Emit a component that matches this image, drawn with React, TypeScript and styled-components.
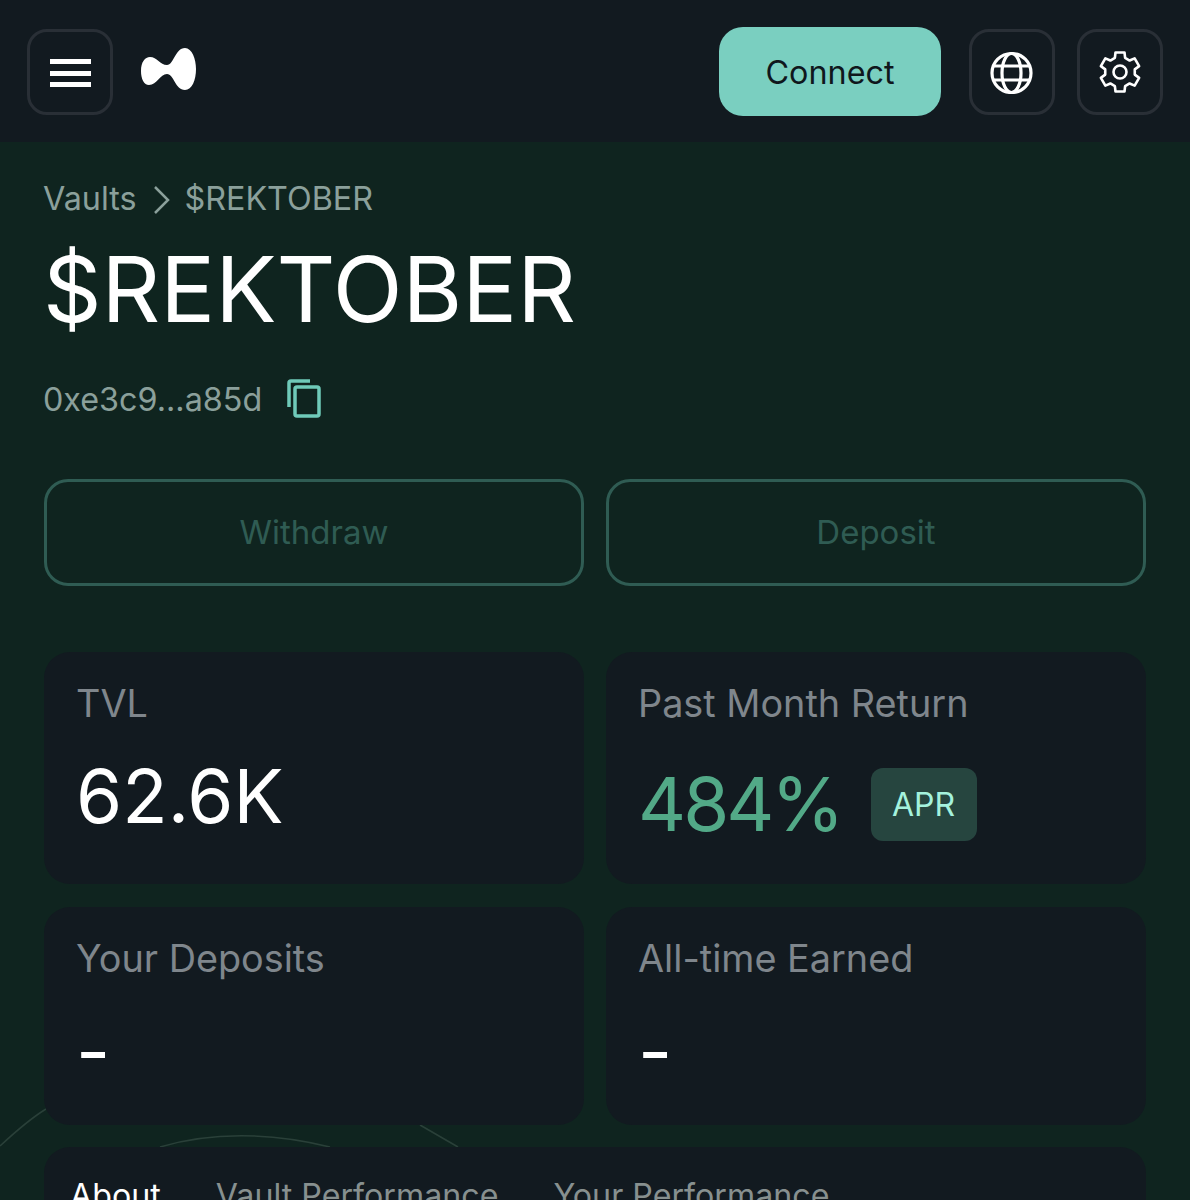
import styled, { createGlobalStyle } from 'styled-components';

const GlobalStyle = createGlobalStyle`
    html, body {
        margin: 0;
        background: #0f241f;
        font-family: Inter, "Liberation Sans", sans-serif;
    }
`;

const Page = styled.div`
    position: relative;
    width: 1190px;
    height: 1200px;
    overflow: hidden;
    background: #0f241f;
`;

const TopBar = styled.header`
    display: flex;
    align-items: center;
    height: 142px;
    padding: 0 27px 0 27px;
    box-sizing: border-box;
    background: #121a20;
`;

const IconButton = styled.button`
    display: flex;
    align-items: center;
    justify-content: center;
    width: 86px;
    height: 86px;
    margin-top: 2px;
    padding: 0;
    box-sizing: border-box;
    background: transparent;
    border: 3px solid #292f36;
    border-radius: 20px;
    color: #fff;
`;

const Logo = styled.svg`
    width: 58px;
    height: 44px;
    margin: -4px 0 0 26px;
`;

const Spacer = styled.div`
    flex: 1;
`;

const ConnectButton = styled.button`
    width: 222px;
    height: 89px;
    margin-right: 28px;
    padding: 2px 0 0;
    background: #7acfc0;
    border: none;
    border-radius: 24px;
    color: #0f171c;
    font: 400 32.3px Inter, sans-serif;
`;

const SettingsButton = styled(IconButton)`
    margin-left: 22px;
`;

const Main = styled.main`
    position: relative;
    padding: 0 44px;
`;

const Breadcrumbs = styled.nav`
    display: flex;
    align-items: center;
    height: 40px;
    margin-left: -1px;
    padding-top: 37px;
    color: #8ba09b;
    font-size: 32.3px;
    line-height: 40px;
`;

const Crumb = styled.span`
    display: block;
`;

const Chevron = styled.svg`
    width: 20px;
    height: 32px;
    margin: 2px 12px 0 16px;
`;

const Title = styled.h1`
    margin: 17px 0 0 -1px;
    color: #fff;
    font-size: 91.3px;
    font-weight: 400;
    line-height: 107px;
`;

const AddressRow = styled.div`
    display: flex;
    align-items: center;
    height: 42px;
    margin: 35px 0 0 -1px;
    color: #8ba09b;
    font-size: 32.3px;
`;

const CopyIcon = styled.svg`
    width: 36px;
    height: 40px;
    margin: -2px 0 0 24px;
`;

const ActionRow = styled.div`
    display: grid;
    grid-template-columns: 1fr 1fr;
    gap: 22px;
    margin-top: 59px;
`;

const ActionButton = styled.button`
    height: 107px;
    padding: 0 0 2px;
    background: transparent;
    border: 3px solid #2f5c53;
    border-radius: 24px;
    color: #2f5c53;
    font: 400 33px Inter, sans-serif;
`;

const StatsGrid = styled.div`
    display: grid;
    grid-template-columns: 1fr 1fr;
    grid-template-rows: 232px 218px;
    gap: 23px 22px;
    margin-top: 66px;
`;

const StatCard = styled.section`
    position: relative;
    padding: 29px 32px 0;
    background: #121a20;
    border-radius: 26px;
`;

const StatLabel = styled.div`
    color: #7f868c;
    font-size: 37.8px;
    line-height: 44px;
`;

const StatValueRow = styled.div<{ $top: number }>`
    display: flex;
    align-items: center;
    margin-top: ${p => p.$top}px;
`;

const StatValue = styled.div<{ $accent?: boolean }>`
    color: ${p => (p.$accent ? '#52a987' : '#fff')};
    font-size: 74.5px;
    letter-spacing: ${p => (p.$accent ? '-3px' : '0')};
    line-height: 92px;
`;

const Badge = styled.span`
    display: flex;
    align-items: center;
    justify-content: center;
    width: 106px;
    height: 73px;
    margin-left: 29px;
    background: #26453f;
    border-radius: 12px;
    color: #a4f2dd;
    font-size: 32px;
`;

const TabsCard = styled.section`
    display: flex;
    gap: 55px;
    height: 120px;
    margin-top: 22px;
    padding: 29px 26px 0;
    background: #121a20;
    border-radius: 26px 26px 0 0;
`;

const Tab = styled.span<{ $active?: boolean }>`
    color: ${p => (p.$active ? '#fff' : '#87908f')};
    font-size: 32.2px;
    line-height: 40px;
`;

const Waves = styled.svg`
    position: absolute;
    left: 0;
    top: 1060px;
    width: 600px;
    height: 140px;
`;

// six teeth, one pointing straight up
const gearPoints = Array.from({ length: 6 })
    .flatMap((_, i) => {
        const a = -90 + 60 * i;
        return [
            [a - 20, 15],
            [a - 13, 20],
            [a + 13, 20],
            [a + 20, 15],
        ];
    })
    .map(([deg, r]) => {
        const rad = (deg * Math.PI) / 180;
        return `${(22 + r * Math.cos(rad)).toFixed(2)},${(22 + r * Math.sin(rad)).toFixed(2)}`;
    })
    .join(' ');

export default function App() {
    return (
        <Page>
            <GlobalStyle />
            <Waves viewBox="0 0 600 140" fill="none" stroke="#2a4039" strokeWidth="1.5">
                <path d="M0 86C14 73 28 60 46 49" />
                <path d="M160 87C210 72 270 72 330 87" />
                <path d="M420 65L458 87" />
            </Waves>
            <TopBar>
                <IconButton>
                    <svg width="44" height="32" viewBox="0 0 44 32" fill="#fff">
                        <rect x="2" y="3" width="41" height="5" />
                        <rect x="2" y="15" width="41" height="5" />
                        <rect x="2" y="26" width="41" height="5" />
                    </svg>
                </IconButton>
                <Logo viewBox="0 0 58 44" fill="#fff">
                    <path d="M2 24C2 15 6 10 11 10C18 10 21 18 28 18C35 18 36 1 46 1C53 1 57 12 57 22C57 33 53 43 46 43C36 43 35 27 28 27C21 27 18 38 10 38C5 38 2 32 2 24Z" />
                </Logo>
                <Spacer />
                <ConnectButton>Connect</ConnectButton>
                <IconButton>
                    <svg width="44" height="44" viewBox="0 0 44 44" fill="none" stroke="#fff" strokeWidth="3.200">
                        <circle cx="21.500" cy="23" r="19.500" />
                        <ellipse cx="21.500" cy="23" rx="9.500" ry="19.500" />
                        <path d="M3 16H40M3 30H40" />
                    </svg>
                </IconButton>
                <SettingsButton>
                    <svg width="44" height="44" viewBox="0 0 44 44" fill="none" stroke="#fff" strokeWidth="2.600" strokeLinejoin="round">
                        <polygon points={gearPoints} />
                        <circle cx="22" cy="22" r="6.500" />
                    </svg>
                </SettingsButton>
            </TopBar>
            <Main>
                <Breadcrumbs>
                    <Crumb>Vaults</Crumb>
                    <Chevron viewBox="0 0 20 32" fill="none" stroke="#8ba09b" strokeWidth="2.500">
                        <path d="M3 3L16 16L3 29" />
                    </Chevron>
                    <Crumb>$REKTOBER</Crumb>
                </Breadcrumbs>
                <Title>$REKTOBER</Title>
                <AddressRow>
                    0xe3c9...a85d
                    <CopyIcon viewBox="0 0 36 40" fill="none" stroke="#6fcab9" strokeWidth="3.500">
                        <path d="M24 3H5Q3 3 3 5V29" />
                        <rect x="9" y="9" width="24" height="29" rx="2" />
                    </CopyIcon>
                </AddressRow>
                <ActionRow>
                    <ActionButton>Withdraw</ActionButton>
                    <ActionButton>Deposit</ActionButton>
                </ActionRow>
                <StatsGrid>
                    <StatCard>
                        <StatLabel>TVL</StatLabel>
                        <StatValueRow $top={25}>
                            <StatValue>62.6K</StatValue>
                        </StatValueRow>
                    </StatCard>
                    <StatCard>
                        <StatLabel>Past Month Return</StatLabel>
                        <StatValueRow $top={33}>
                            <StatValue $accent>484%</StatValue>
                            <Badge>APR</Badge>
                        </StatValueRow>
                    </StatCard>
                    <StatCard>
                        <StatLabel>Your Deposits</StatLabel>
                        <StatValueRow $top={25}>
                            <StatValue>-</StatValue>
                        </StatValueRow>
                    </StatCard>
                    <StatCard>
                        <StatLabel>All-time Earned</StatLabel>
                        <StatValueRow $top={25}>
                            <StatValue>-</StatValue>
                        </StatValueRow>
                    </StatCard>
                </StatsGrid>
                <TabsCard>
                    <Tab $active>About</Tab>
                    <Tab>Vault Performance</Tab>
                    <Tab>Your Performance</Tab>
                </TabsCard>
            </Main>
        </Page>
    );
}
